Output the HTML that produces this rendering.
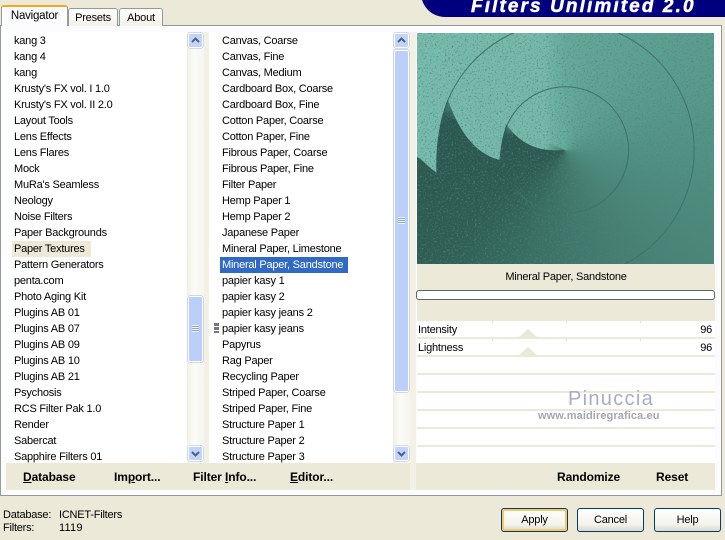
<!DOCTYPE html>
<html><head><meta charset="utf-8"><style>
html,body{margin:0;padding:0}
body{width:725px;height:540px;position:relative;overflow:hidden;background:#ece9d8;font:11px "Liberation Sans",sans-serif;letter-spacing:-.22px;color:#000}
.a{position:absolute}
.tab{position:absolute;border:1px solid #919b9c;border-bottom:0;border-radius:3px 3px 0 0;background:linear-gradient(#fff,#f3f1e7);text-align:center;box-sizing:border-box}
.list{position:absolute;top:32px;padding-top:1px;overflow:hidden;background:#fff}
.list div{height:16px;line-height:16px;white-space:nowrap}
.sb{position:absolute;width:17px;top:32px;height:431px;background:linear-gradient(90deg,#f1efe3,#fbfbf7 40%,#f6f5ee)}
.btn{position:absolute;width:15px;height:15px;left:1px;border:1px solid #fff;box-sizing:border-box;border-radius:2px;background:#c3d4fa;box-shadow:0 0 0 .5px #a9bce8}
.thumb{position:absolute;left:1px;width:15px;box-sizing:border-box;background:#bccffa;border-radius:2px;border:1px solid #fff;box-shadow:0 0 0 .5px #9fb5ea}
.b{position:absolute;font-weight:bold;font-size:12px;letter-spacing:-.1px;top:470px;line-height:15px}
.row{position:absolute;left:417px;width:298px;height:16px;background:#fff}
.row span{position:absolute;top:1px;line-height:16px}
.tri{position:absolute;left:519px;width:0;height:0;border-left:9px solid transparent;border-right:9px solid transparent;border-bottom:8px solid #ece9d8}
.tk{position:absolute;top:0;width:1px;height:2px;background:#ddd}
.pb{position:absolute;top:508px;width:67px;height:24px;box-sizing:border-box;border:1px solid #003c74;border-radius:3px;background:linear-gradient(#fff,#f4f3ec 70%,#dcd8c9);text-align:center;line-height:22px}
</style></head><body>

<!-- header -->
<div class="a" style="left:421px;top:-20px;width:320px;height:37px;background:#00007f;border-radius:0 0 0 24px"></div>
<div class="a" style="left:471px;top:-2px;width:240px;color:#fff;font:italic bold 19px/17px 'Liberation Sans',sans-serif;letter-spacing:2.1px;white-space:nowrap;-webkit-text-stroke:.5px #fff">Filters Unlimited 2.0</div>

<!-- panel -->
<div class="a" style="left:0;top:25px;width:722px;height:471px;box-sizing:border-box;border:1px solid #919b9c;background:#fcfcfe"></div>
<div class="tab" style="left:1px;top:5px;width:67px;height:21px;border-top:2px solid #f5a623;background:#fcfcfe;line-height:19px;border-bottom:0;z-index:2;font-size:11.5px">Navigator</div>
<div class="tab" style="left:68px;top:8px;width:50px;height:18px;line-height:18px">Presets</div>
<div class="tab" style="left:119px;top:8px;width:44px;height:18px;line-height:18px">About</div>

<!-- bottom button bars -->
<div class="a" style="left:6px;top:463px;width:404px;height:27px;background:#ece9d8"></div>
<div class="a" style="left:416px;top:463px;width:299px;height:27px;background:#ece9d8"></div>
<div class="a" style="left:204px;top:32px;width:5px;height:431px;background:#f3f1e6"></div>
<div class="a" style="left:410px;top:32px;width:6px;height:458px;background:#f3f1e6"></div>

<!-- list 1 -->
<div class="list" style="left:6px;height:430px;padding-left:8px;box-sizing:content-box;width:173px">
<div>kang 3</div><div>kang 4</div><div>kang</div><div>Krusty's FX vol. I 1.0</div><div>Krusty's FX vol. II 2.0</div><div>Layout Tools</div><div>Lens Effects</div><div>Lens Flares</div><div>Mock</div><div>MuRa's Seamless</div><div>Neology</div><div>Noise Filters</div><div>Paper Backgrounds</div><div style="background:#ece9d8;width:79px;margin-left:-2px;padding-left:2px;box-sizing:border-box">Paper Textures</div><div>Pattern Generators</div><div>penta.com</div><div>Photo Aging Kit</div><div>Plugins AB 01</div><div>Plugins AB 07</div><div>Plugins AB 09</div><div>Plugins AB 10</div><div>Plugins AB 21</div><div>Psychosis</div><div>RCS Filter Pak 1.0</div><div>Render</div><div>Sabercat</div><div>Sapphire Filters 01</div>
</div>
<div class="sb" style="left:187px">
 <div class="btn" style="top:1px"><svg width="13" height="13" style="display:block"><path d="M3 8 L6.5 4.5 L10 8" fill="none" stroke="#4d6185" stroke-width="2"/></svg></div>
 <div class="thumb" style="top:264px;height:66px"><div style="position:absolute;left:3px;top:28px;width:7px;height:7px;background:repeating-linear-gradient(#eef3fe 0 1px,#8fa8dc 1px 2px)"></div></div>
 <div class="btn" style="top:414px"><svg width="13" height="13" style="display:block"><path d="M3 5 L6.5 8.5 L10 5" fill="none" stroke="#4d6185" stroke-width="2"/></svg></div>
</div>

<!-- list 2 -->
<div class="list" style="left:209px;width:171px;height:430px;padding-left:13px">
<div>Canvas, Coarse</div><div>Canvas, Fine</div><div>Canvas, Medium</div><div>Cardboard Box, Coarse</div><div>Cardboard Box, Fine</div><div>Cotton Paper, Coarse</div><div>Cotton Paper, Fine</div><div>Fibrous Paper, Coarse</div><div>Fibrous Paper, Fine</div><div>Filter Paper</div><div>Hemp Paper 1</div><div>Hemp Paper 2</div><div>Japanese Paper</div><div>Mineral Paper, Limestone</div><div style="background:#316ac5;color:#fff;width:128px;margin-left:-2px;padding-left:2px;box-sizing:border-box">Mineral Paper, Sandstone</div><div>papier kasy 1</div><div>papier kasy 2</div><div>papier kasy jeans 2</div><div>papier kasy jeans</div><div>Papyrus</div><div>Rag Paper</div><div>Recycling Paper</div><div>Striped Paper, Coarse</div><div>Striped Paper, Fine</div><div>Structure Paper 1</div><div>Structure Paper 2</div><div>Structure Paper 3</div>
</div>
<div class="a" style="left:214px;top:323px;width:5px;height:10px;background:repeating-linear-gradient(#777 0 3px,#fff 3px 4px)"></div>
<div class="sb" style="left:393px">
 <div class="btn" style="top:1px"><svg width="13" height="13" style="display:block"><path d="M3 8 L6.5 4.5 L10 8" fill="none" stroke="#4d6185" stroke-width="2"/></svg></div>
 <div class="thumb" style="top:18px;height:342px"><div style="position:absolute;left:3px;top:166px;width:7px;height:7px;background:repeating-linear-gradient(#eef3fe 0 1px,#8fa8dc 1px 2px)"></div></div>
 <div class="btn" style="top:414px"><svg width="13" height="13" style="display:block"><path d="M3 5 L6.5 8.5 L10 5" fill="none" stroke="#4d6185" stroke-width="2"/></svg></div>
</div>

<!-- preview -->
<div class="a" style="left:417px;top:33px;width:297px;height:231px;overflow:hidden;background:conic-gradient(from 0deg at 148px 117px,#64aa9a 0deg,#5b9e8f 50deg,#4f8f80 100deg,#467f72 150deg,#3a7064 195deg,#2d5c52 235deg,#2a574e 285deg,#64aa9a 300deg,#64aa9a 360deg)">
<svg width="297" height="231" viewBox="0 0 297 231" style="position:absolute;left:0;top:0">
<defs>
<linearGradient id="lg" x1="0" x2="1" y1="0" y2="0"><stop offset="0" stop-color="#78bcad"/><stop offset=".8" stop-color="#76b9aa"/><stop offset="1" stop-color="#62a898" stop-opacity="0"/></linearGradient>
<filter id="n" x="0" y="0" width="100%" height="100%"><feTurbulence type="fractalNoise" baseFrequency=".6" numOctaves="3" seed="7"/><feColorMatrix values="0 0 0 0 .08  0 0 0 0 .22  0 0 0 0 .2  1.5 1.5 1.5 0 -2.3"/></filter>
</defs>
<path fill="url(#lg)" d="M148,117 C122,119 104,112 90,92 C85,105 84,118 83,127 C62,122 44,104 31,67 C24,85 19,110 20,140 C11,134 5,126 0,124 L0,0 L160,0 L160,117 Z"/>
<g fill="none" stroke="#3a7266" stroke-width="1">
<path d="M90.2,92 A63.3,63.3 0 1 1 100,158"/>
<path d="M31,67 A128.3,128.3 0 0 1 90,3 A128.3,128.3 0 1 1 90,231"/>
</g>
<path d="M31,67 C24,85 19,110 20,140" fill="none" stroke="#2a5a50" stroke-width="1.2"/>
<path d="M90,92 C85,105 84,118 83,127" fill="none" stroke="#2a5a50" stroke-width="1.2"/>
<rect width="297" height="231" filter="url(#n)"/>
</svg>
</div>

<div class="a" style="left:417px;top:264px;width:298px;height:57px;background:#ece9d8"></div>
<div class="a" style="left:417px;top:270px;width:298px;text-align:center;line-height:14px">Mineral Paper, Sandstone</div>
<div class="a" style="left:416px;top:290px;width:299px;height:10px;box-sizing:border-box;border:1px solid #5c6468;border-radius:3px;background:#fff"></div>

<!-- params -->
<div class="a" style="left:417px;top:321px;width:298px;height:142px;background:#ece9d8"></div>
<div class="row" style="top:321px"><span style="left:1px">Intensity</span><span style="right:3px">96</span><i class="tk" style="left:75px"></i><i class="tk" style="left:149px"></i><i class="tk" style="left:223px"></i></div>
<div class="row" style="top:339px"><span style="left:1px">Lightness</span><span style="right:3px">96</span><i class="tk" style="left:75px"></i><i class="tk" style="left:149px"></i><i class="tk" style="left:223px"></i></div>
<div class="tri" style="top:329px"></div>
<div class="tri" style="top:347px"></div>
<div class="row" style="top:357px"></div>
<div class="row" style="top:375px"></div>
<div class="row" style="top:393px"></div>
<div class="row" style="top:411px"></div>
<div class="row" style="top:429px"></div>
<div class="row" style="top:447px"></div>

<!-- watermark -->
<div class="a" style="left:568px;top:388px;color:#a8acc8;font-size:20px;line-height:22px;letter-spacing:1.3px;white-space:nowrap">Pinuccia</div>
<div class="a" style="left:538px;top:410px;color:#a3a6b8;font-size:11px;line-height:13px;font-weight:bold;letter-spacing:.1px;white-space:nowrap">www.maidiregrafica.eu</div>

<!-- bold actions -->
<div class="b" style="left:23px"><u>D</u>atabase</div>
<div class="b" style="left:114px">Im<u>p</u>ort...</div>
<div class="b" style="left:193px">Filter <u>I</u>nfo...</div>
<div class="b" style="left:290px"><u>E</u>ditor...</div>
<div class="b" style="left:557px">Randomize</div>
<div class="b" style="left:656px">Reset</div>

<!-- status -->
<div class="a" style="left:3px;top:508px;line-height:14px">Database:</div>
<div class="a" style="left:59px;top:508px;line-height:14px">ICNET-Filters</div>
<div class="a" style="left:3px;top:521px;line-height:14px">Filters:</div>
<div class="a" style="left:59px;top:521px;line-height:14px;letter-spacing:.2px">1119</div>

<!-- buttons -->
<div class="pb" style="left:501px;box-shadow:inset 0 0 0 2px #fbc761">Apply</div>
<div class="pb" style="left:577px">Cancel</div>
<div class="pb" style="left:654px">Help</div>
</body></html>
